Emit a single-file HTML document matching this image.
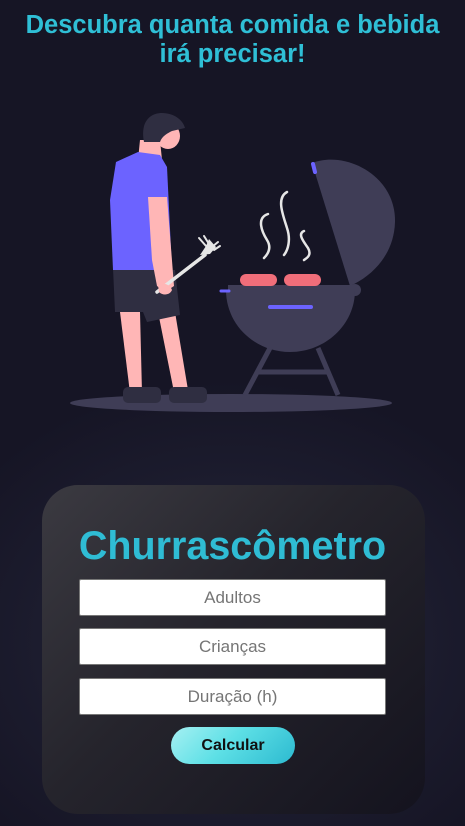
<!DOCTYPE html>
<html><head><meta charset="utf-8"><style>
html,body{margin:0;padding:0;}
body{width:465px;height:826px;overflow:hidden;background:radial-gradient(ellipse 320px 260px at 232px 640px,#262840 0%,#1c1c2e 60%,#161525 100%);font-family:"Liberation Sans",Arial,sans-serif;position:relative;}
h1{position:absolute;top:11px;left:0;width:465px;margin:0;text-align:center;color:#2fbfd6;font-size:25.5px;line-height:29px;font-weight:bold;}
svg{position:absolute;left:0;top:0;}
.card{position:absolute;left:42px;top:485px;width:383px;height:329px;border-radius:36px;background:linear-gradient(135deg,#3b3a41 0%,#25242c 45%,#14131e 100%);}
.t2{position:absolute;left:0;top:524px;width:465px;text-align:center;color:#2fbcd4;font-size:39.5px;font-weight:bold;line-height:44px;margin:0;}
.inp{position:absolute;left:79px;width:305px;height:35px;background:#fff;border:1px solid #777;border-radius:2px;text-align:center;color:#757575;font-size:17px;line-height:35px;}
.btn{position:absolute;left:171px;top:727px;width:124px;height:37px;border-radius:19px;background:linear-gradient(135deg,#a6f0f2 0%,#5ee0e6 45%,#2cbad0 100%);text-align:center;font-weight:bold;font-size:16px;line-height:37px;color:#111;}
</style></head><body>
<h1>Descubra quanta comida e bebida<br>irá precisar!</h1>
<svg width="465" height="430" viewBox="0 0 465 430">
<ellipse cx="231" cy="403" rx="161" ry="9" fill="#3f3d56"/>
<g stroke="#3f3d56" stroke-width="5" fill="none">
<line x1="270" y1="348" x2="245" y2="395"/>
<line x1="318" y1="348" x2="338" y2="395"/>
<line x1="258" y1="372" x2="328" y2="372"/>
</g>
<path d="M312,163 C345,150 396,175 395,222 C394,255 372,276 350,286 Z" fill="#3f3d56"/>
<line x1="313" y1="164" x2="315" y2="172" stroke="#6c63ff" stroke-width="4" stroke-linecap="round"/>
<circle cx="355" cy="290" r="6" fill="#3f3d56"/>
<path d="M226,290 L355,290 C355,325 325,352 290,352 C255,352 226,325 226,290 Z" fill="#3f3d56"/>
<rect x="228" y="285" width="124" height="6" fill="#3f3d56"/>
<line x1="221" y1="291" x2="229" y2="291" stroke="#6c63ff" stroke-width="3" stroke-linecap="round"/>
<line x1="270" y1="307" x2="311" y2="307" stroke="#6c63ff" stroke-width="4" stroke-linecap="round"/>
<rect x="240" y="274" width="37" height="12" rx="6" fill="#f06e7a"/>
<rect x="284" y="274" width="37" height="12" rx="6" fill="#f06e7a"/>
<g stroke="#e6e6e6" stroke-width="2.5" fill="none" stroke-linecap="round">
<path d="M268,214 C256,218 262,232 267,240 C272,248 268,254 264,258"/>
<path d="M287,192 C276,198 283,215 287,228 C291,240 288,250 284,255"/>
<path d="M304,231 C297,234 304,242 308,248 C312,255 307,258 304,260"/>
</g>
<path d="M120,312 L140,312 L142,393 L130,393 Z" fill="#ffb6b6"/>
<path d="M158,312 L175,312 L188,390 L174,392 Z" fill="#ffb6b6"/>
<rect x="123" y="387" width="38" height="16" rx="5" fill="#2f2e41"/>
<rect x="169" y="387" width="38" height="16" rx="5" fill="#2f2e41"/>
<path d="M113,268 L175,270 L180,315 L147,322 L143,312 L115,312 Z" fill="#2f2e41"/>
<path d="M140,140 L160,140 L162,160 L138,160 Z" fill="#ffb6b6"/>
<ellipse cx="168" cy="136" rx="12" ry="13" fill="#ffb6b6"/>
<path d="M144,142 C140,122 150,113 162,113 C174,113 183,120 185,128 L172,131 C168,133 162,136 160,142 Z" fill="#2f2e41"/>
<path d="M110,200 L116,162 L138,152 L160,155 L167,167 L172,270 L113,270 Z" fill="#6c63ff"/>
<path d="M148,197 L167,197 L174,286 L165,292 L157,286 L152,260 Z" fill="#ffb6b6"/>
<line x1="157" y1="292" x2="205" y2="255" stroke="#e6e6e6" stroke-width="3.5" stroke-linecap="round"/>
<path d="M200,255 L206,246 L209,239 L216,247 L210,254 Z" fill="#e6e6e6"/>
<g stroke="#e6e6e6" stroke-width="2" stroke-linecap="round">
<line x1="206" y1="246" x2="199" y2="238"/><line x1="209" y1="244" x2="204" y2="236"/><line x1="212" y1="247" x2="218" y2="242"/><line x1="214" y1="250" x2="220" y2="246"/>
</g>
<path d="M158,285 C162,282 170,284 172,290 C170,295 163,296 159,292 Z" fill="#ffb6b6"/>
</svg>
<div class="card"></div>
<div class="t2">Churrascômetro</div>
<div class="inp" style="top:579px">Adultos</div>
<div class="inp" style="top:628px">Crianças</div>
<div class="inp" style="top:678px">Duração (h)</div>
<div class="btn">Calcular</div>
</body></html>
